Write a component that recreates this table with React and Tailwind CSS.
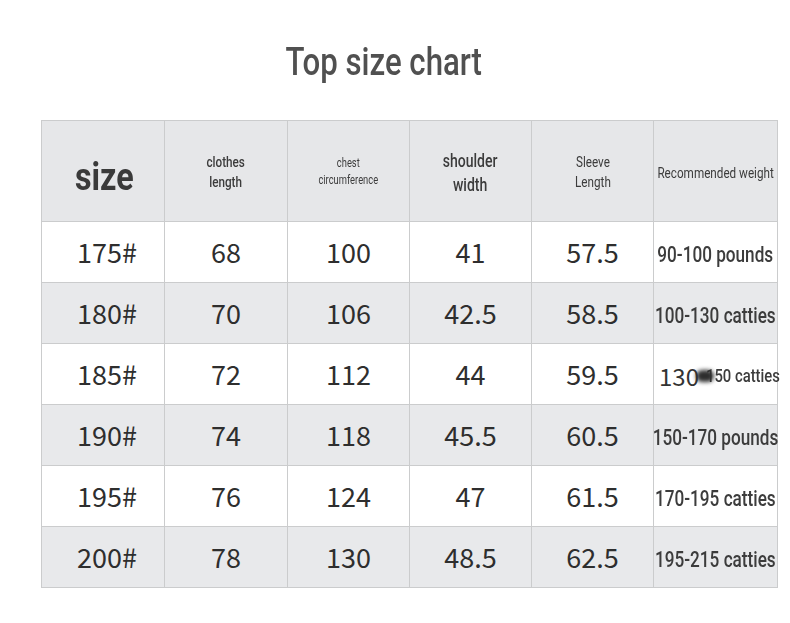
import React from 'react';

const rows = [
  { size: '175#', len: '68', chest: '100', shoulder: '41', sleeve: '57.5', weight: '90-100 pounds', shade: false },
  { size: '180#', len: '70', chest: '106', shoulder: '42.5', sleeve: '58.5', weight: '100-130 catties', shade: true },
  { size: '185#', len: '72', chest: '112', shoulder: '44', sleeve: '59.5', weight: 'smudge', shade: false },
  { size: '190#', len: '74', chest: '118', shoulder: '45.5', sleeve: '60.5', weight: '150-170 pounds', shade: true },
  { size: '195#', len: '76', chest: '124', shoulder: '47', sleeve: '61.5', weight: '170-195 catties', shade: false },
  { size: '200#', len: '78', chest: '130', shoulder: '48.5', sleeve: '62.5', weight: '195-215 catties', shade: true },
];

const cell = 'border border-[#cbcccd] text-center align-middle p-0';
const num = "text-[27px] text-[#2e2e2e] font-['Noto_Sans_CJK_SC','Noto_Sans',sans-serif] font-normal";
const narrow = "inline-block scale-x-[0.78] font-['Roboto',sans-serif] text-[#3c3c3c] whitespace-nowrap";

const Weight = ({ text }) => {
  if (text === 'smudge') {
    return (
      <span className="flex items-center pl-[17px] pt-1 w-full">
        <span className="shrink-0 text-[24px] text-[#333] font-['Noto_Sans_CJK_SC','Noto_Sans',sans-serif]">130</span>
        <span className="shrink-0 w-[18px] h-[12px] -ml-[3px] -mr-[8px] relative z-10 rounded-full bg-[#2e2e2e] blur-[2px]" />
        <span className="shrink-0 inline-block scale-x-[0.78] origin-left font-['Roboto',sans-serif] text-[#3c3c3c] text-[19px] font-medium whitespace-nowrap">150 catties</span>
      </span>
    );
  }
  return <span className={narrow + ' text-[22px] font-medium pt-1'}>{text}</span>;
};

export default function App() {
  return (
    <div className="w-[790px] h-[623px] bg-white font-['Roboto',sans-serif]">
      <div className="pt-[43px] pr-[22px] text-center h-[120px]">
        <span className="inline-block scale-x-[0.8] text-[39px] font-medium text-[#505050] leading-none">Top size chart</span>
      </div>
      <table className="ml-[41px] border-collapse table-fixed w-[736px]">
        <colgroup>
          <col className="w-[123px]" />
          <col className="w-[123px]" />
          <col className="w-[122px]" />
          <col className="w-[122px]" />
          <col className="w-[122px]" />
          <col className="w-[124px]" />
        </colgroup>
        <thead>
          <tr className="h-[101px] bg-[#e6e7e9]">
            <th className={cell}>
              <span className="inline-block scale-x-[0.85] text-[38px] font-bold text-[#3a3a3a] leading-none pt-3 pl-1">size</span>
            </th>
            <th className={cell}>
              <span className={narrow + ' text-[15px] font-medium leading-[20px] pt-1'}>clothes<br />length</span>
            </th>
            <th className={cell}>
              <span className={narrow + ' text-[12px] font-normal leading-[17px] pt-1'}>chest<br />circumference</span>
            </th>
            <th className={cell}>
              <span className={narrow + ' text-[18px] font-medium leading-[24px] pt-1'}>shoulder<br />width</span>
            </th>
            <th className={cell}>
              <span className={narrow + ' text-[15px] font-normal leading-[20px] pt-1'}>Sleeve<br />Length</span>
            </th>
            <th className={cell + ' overflow-visible'}>
              <span className={narrow + ' text-[15px] font-normal -mx-4 pt-1'}>Recommended weight</span>
            </th>
          </tr>
        </thead>
        <tbody>
          {rows.map((r) => (
            <tr key={r.size} className={'h-[61px] ' + (r.shade ? 'bg-[#e8e9eb]' : 'bg-white')}>
              <td className={cell}><span className={num + ' pl-2'}>{r.size}</span></td>
              <td className={cell}><span className={num}>{r.len}</span></td>
              <td className={cell}><span className={num}>{r.chest}</span></td>
              <td className={cell}><span className={num}>{r.shoulder}</span></td>
              <td className={cell}><span className={num}>{r.sleeve}</span></td>
              <td className={cell + ' overflow-visible'}>
                <div className="flex justify-center -mx-3"><Weight text={r.weight} /></div>
              </td>
            </tr>
          ))}
        </tbody>
      </table>
    </div>
  );
}
